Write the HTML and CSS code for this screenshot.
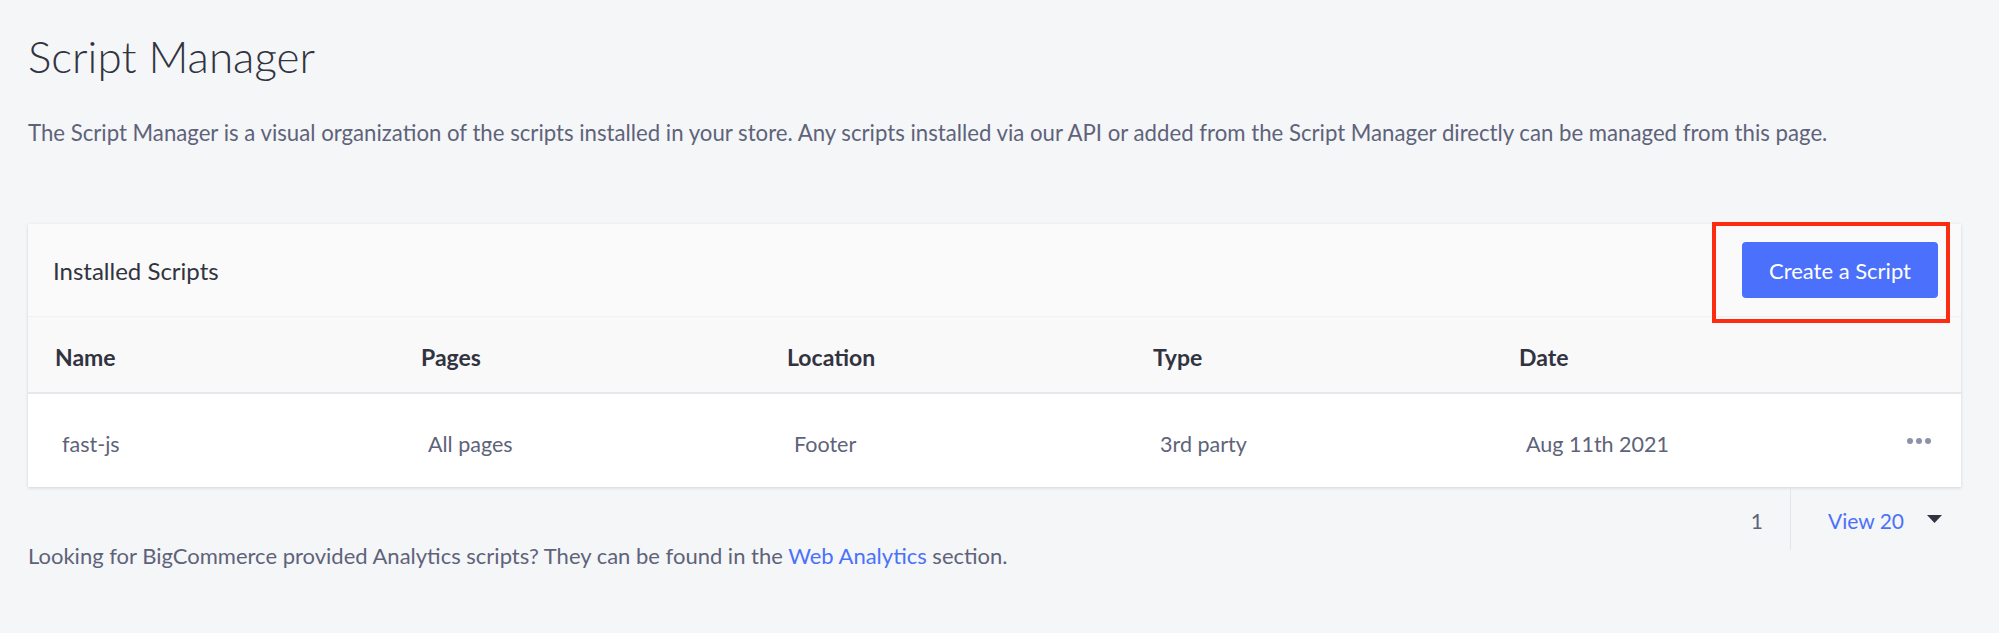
FILE: index.html
```html
<!DOCTYPE html>
<html lang="en">
<head>
<meta charset="utf-8">
<title>Script Manager</title>
<link rel="stylesheet" href="styles.css">
</head>
<body>
<main class="page">
  <h1 class="title">Script Manager</h1>
  <p class="intro">The Script Manager is a visual organization of the scripts installed in your store. Any scripts installed via our API or added from the Script Manager directly can be managed from this page.</p>

  <section class="card">
    <header class="card-head">
      <h2 class="card-title">Installed Scripts</h2>
      <button class="btn-primary" type="button">Create a Script</button>
      <span class="highlight"></span>
    </header>
    <div class="row row-head">
      <div class="cell">Name</div>
      <div class="cell">Pages</div>
      <div class="cell">Location</div>
      <div class="cell">Type</div>
      <div class="cell">Date</div>
      <div class="cell"></div>
    </div>
    <div class="row row-body">
      <div class="cell">fast-js</div>
      <div class="cell">All pages</div>
      <div class="cell">Footer</div>
      <div class="cell">3rd party</div>
      <div class="cell">Aug 11th 2021</div>
      <div class="cell cell-actions">
        <svg class="dots" width="24" height="6" viewBox="0 0 24 6" aria-hidden="true">
          <circle cx="3" cy="3" r="3"/><circle cx="12" cy="3" r="3"/><circle cx="21" cy="3" r="3"/>
        </svg>
      </div>
    </div>
  </section>

  <nav class="pager">
    <span class="pager-page">1</span>
    <span class="pager-divider"></span>
    <span class="pager-view">View 20</span>
    <svg class="pager-caret" width="15" height="8" viewBox="0 0 15 8" aria-hidden="true"><path d="M0 0h15L7.5 8z"/></svg>
  </nav>

  <p class="footnote">Looking for BigCommerce provided Analytics scripts? They can be found in the <a class="link" href="#">Web Analytics</a> section.</p>
</main>
</body>
</html>
```
FILE: styles.css
```css
* { box-sizing: border-box; }

html, body {
  margin: 0;
  background: #f5f6f8;
}

body {
  font-family: "Lato", "Open Sans", sans-serif;
  color: #5e637a;
}

.page {
  padding: 34px 38px 0 28px;
}

.title {
  margin: 0;
  font-size: 44px;
  font-weight: 300;
  line-height: 44px;
  color: #313440;
}

.intro {
  margin: 40px 0 0;
  font-size: 22.2px;
  line-height: 30px;
  color: #5e637a;
}

.card {
  margin-top: 76px;
  background: #ffffff;
  box-shadow: 0 1px 3px rgba(49, 52, 64, 0.18);
}

.card-head {
  position: relative;
  display: flex;
  align-items: center;
  justify-content: space-between;
  height: 93px;
  padding: 0 23px 0 25px;
  background: #fafafb;
  border-bottom: 1px solid #f0f1f4;
}

.card-title {
  margin: 0;
  font-size: 24px;
  font-weight: 400;
  color: #313440;
}

.btn-primary {
  width: 196px;
  height: 56px;
  border: 0;
  border-radius: 4px;
  background: #4b71fc;
  color: #ffffff;
  font-family: inherit;
  font-size: 22px;
  font-weight: 400;
}

.highlight {
  position: absolute;
  right: 11px;
  top: -2px;
  width: 238px;
  height: 101px;
  border: 4px solid #fb2c0f;
}

.row {
  display: grid;
  grid-template-columns: repeat(5, 366px) 1fr;
  align-items: center;
  padding-left: 27px;
}

.row-head {
  height: 77px;
  padding-top: 5px;
  background: #f9f9fa;
  border-bottom: 2px solid #e6e8ee;
  font-size: 23px;
  font-weight: 700;
  color: #313440;
}

.row-body {
  height: 93px;
  padding-top: 6px;
  background: #ffffff;
  font-size: 21.5px;
  color: #5e637a;
}

.row-body .cell {
  padding-left: 7px;
}

.row-body .cell-actions {
  display: flex;
  justify-content: flex-end;
  padding-right: 30px;
}

.dots {
  fill: #8c92a8;
  margin-top: -6px;
}

.pager {
  display: flex;
  align-items: center;
  justify-content: flex-end;
  height: 63px;
  font-size: 21px;
}

.pager-page,
.pager-view {
  padding-top: 4px;
}

.pager-page {
  color: #5e637a;
}

.pager-divider {
  align-self: stretch;
  width: 1px;
  margin: 0 37px 0 27px;
  background: #e3e5eb;
}

.pager-view {
  color: #4b71fc;
}

.pager-caret {
  margin: 0 19px 0 23px;
  fill: #313440;
}

.footnote {
  margin: -6px 0 0;
  font-size: 22px;
  line-height: 24px;
  color: #5e637a;
}

.link {
  color: #4b71fc;
  text-decoration: none;
}
```
